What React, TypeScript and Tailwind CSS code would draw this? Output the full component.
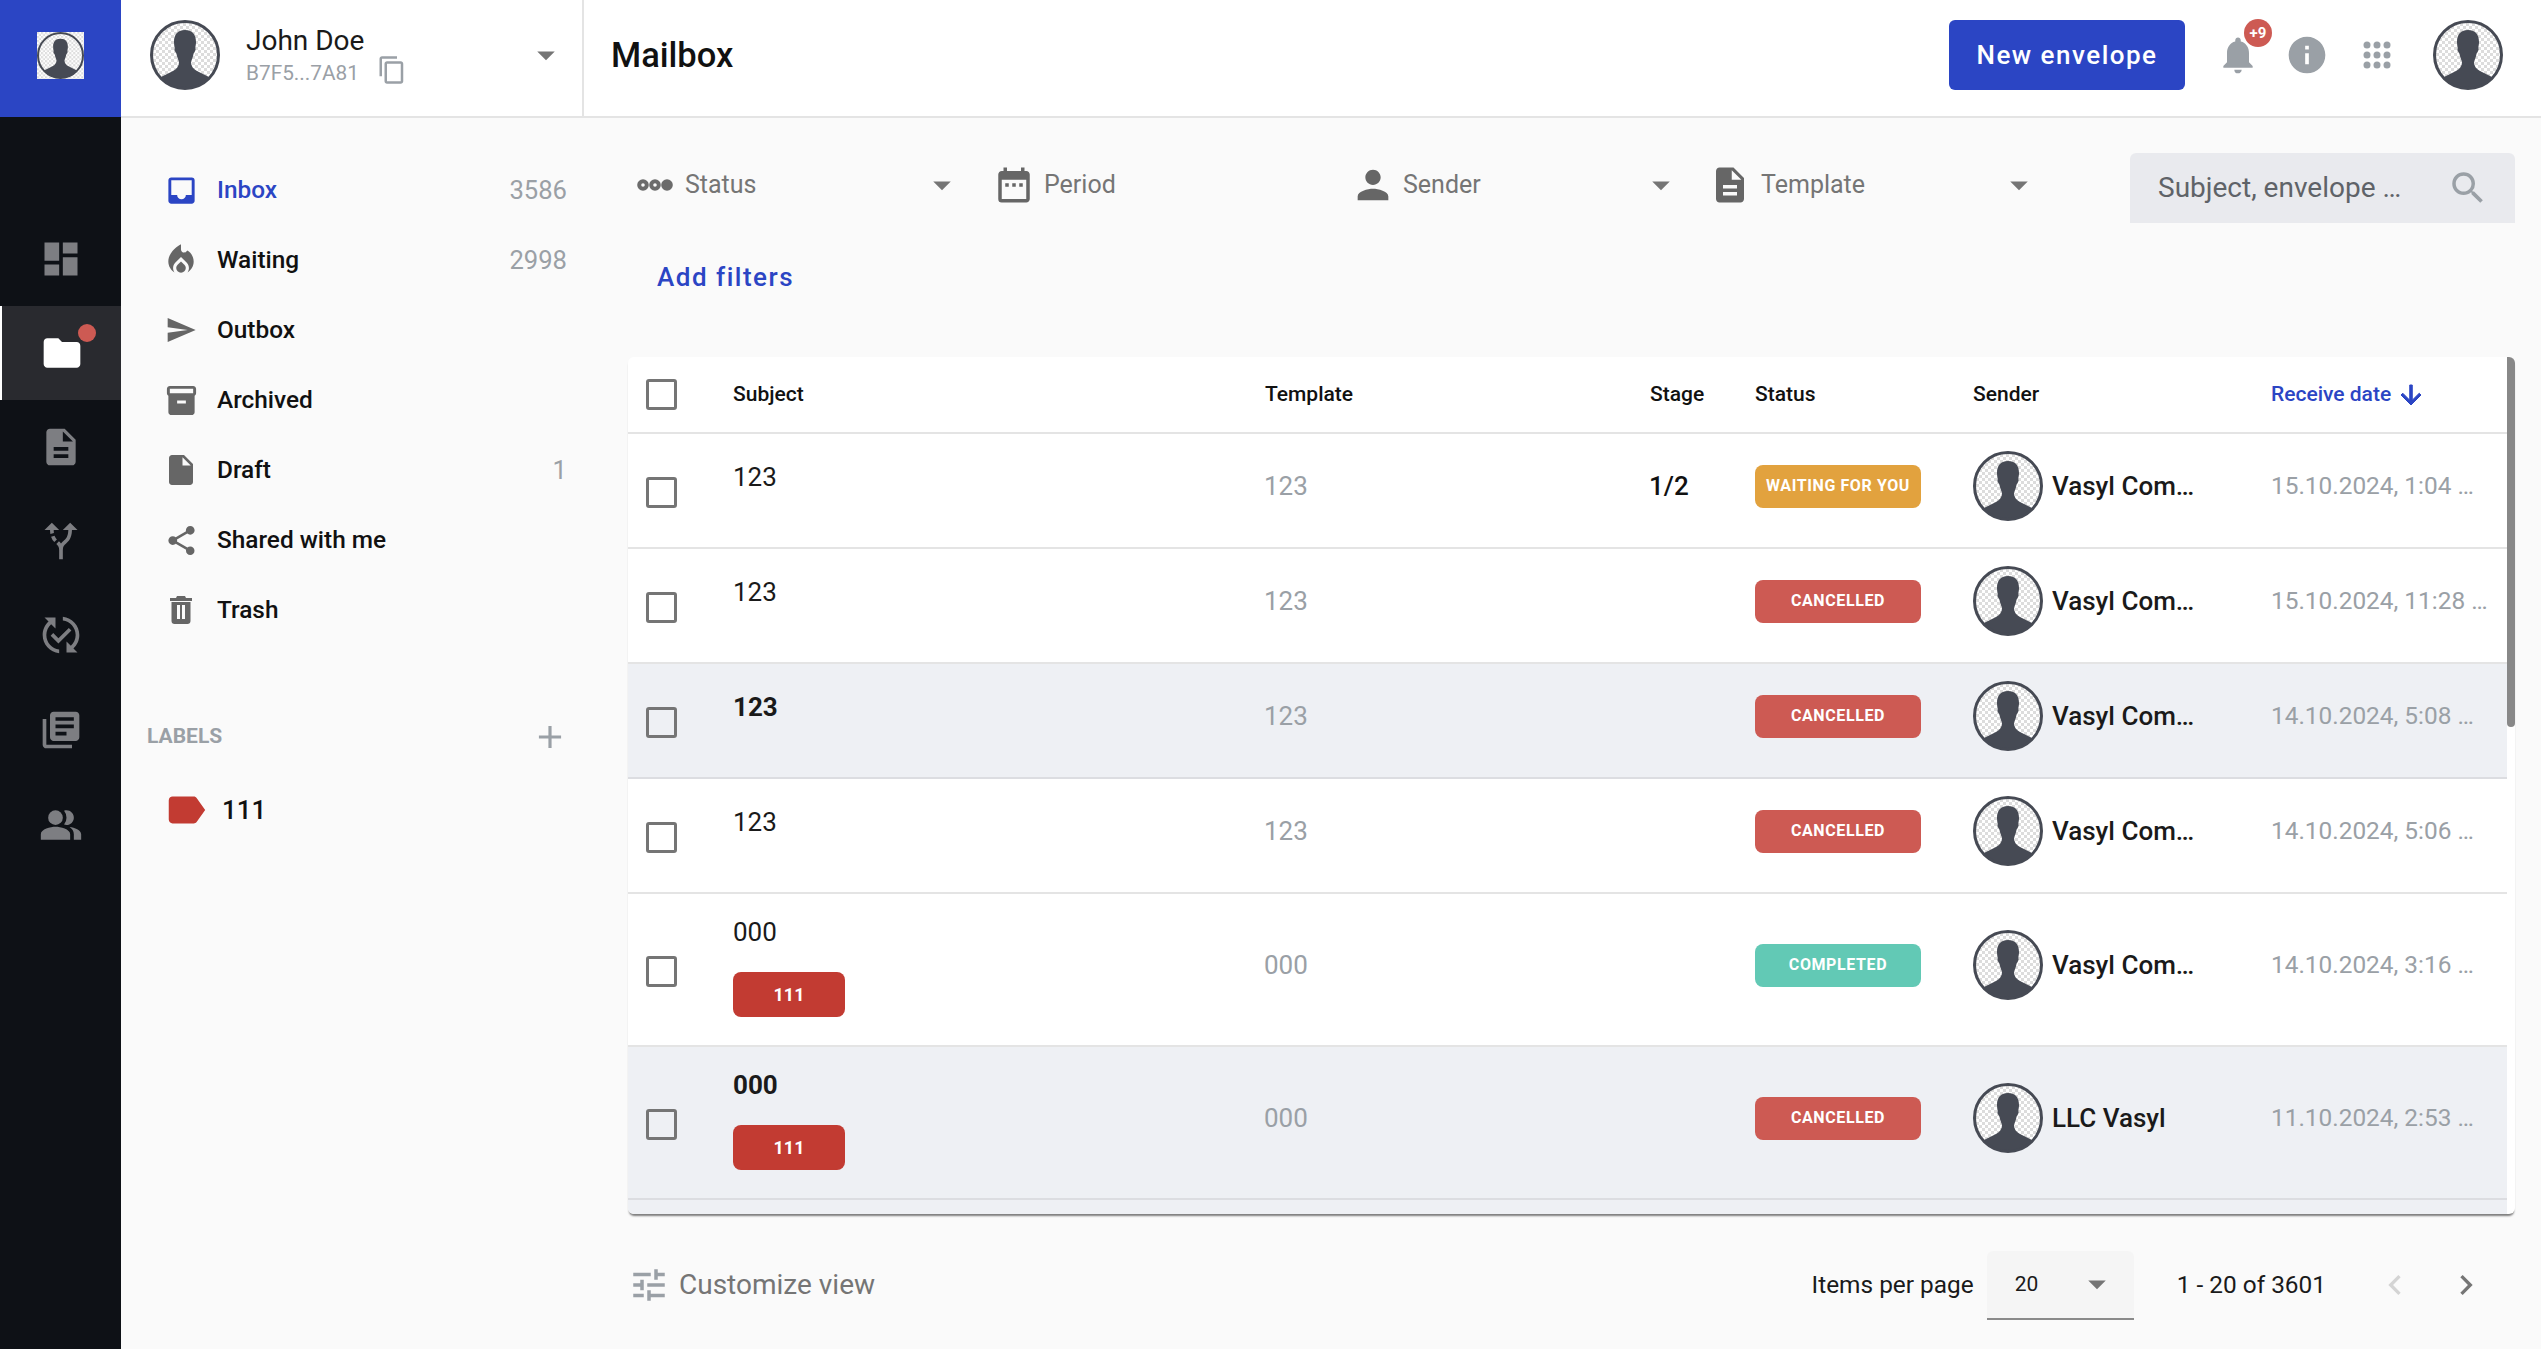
import { useId } from "react";
import type { ReactNode } from "react";
import {
  MdAdd,
  MdAltRoute,
  MdArrowDropDown,
  MdChevronLeft,
  MdChevronRight,
  MdContentCopy,
  MdDashboard,
  MdDateRange,
  MdDescription,
  MdFolder,
  MdInbox,
  MdInfo,
  MdInsertDriveFile,
  MdInventory2,
  MdLabel,
  MdLibraryBooks,
  MdLocalFireDepartment,
  MdNotifications,
  MdPeopleAlt,
  MdPerson,
  MdPublishedWithChanges,
  MdSearch,
  MdSend,
  MdShare,
  MdTune,
} from "react-icons/md";

function Avatar({ className, square }: { className: string; square?: boolean }) {
  const id = useId();
  return (
    <svg viewBox="0 0 70 70" className={className}>
      <defs>
        <pattern id={`${id}c`} width="6" height="6" patternUnits="userSpaceOnUse">
          <rect width="6" height="6" fill="#fff" />
          <rect width="3" height="3" fill="#dcdcdc" />
          <rect x="3" y="3" width="3" height="3" fill="#dcdcdc" />
        </pattern>
        <clipPath id={`${id}a`}>
          <circle cx="35" cy="35" r="34" />
        </clipPath>
      </defs>
      {square && <rect width="70" height="70" fill={`url(#${id}c)`} />}
      <circle cx="35" cy="35" r="34" fill={`url(#${id}c)`} />
      <path
        clipPath={`url(#${id}a)`}
        fill="#464a54"
        d="M35 10C27 10 24 15 24 22C24 26 25 27 24.5 29C24 31 26 32 26.5 34C27 37 28.5 40 29 42C29 46 27 49 23 51L9 58L9 70L61 70L61 58L47 51C43 49 41 46 41 42C41.5 40 43 37 43.5 34C44 32 46 31 45.5 29C45 27 46 26 46 22C46 15 43 10 35 10Z"
      />
      <circle cx="35" cy="35" r="33.5" fill="none" stroke="#464a54" strokeWidth="3" />
    </svg>
  );
}

function StatusDots({ className }: { className: string }) {
  return (
    <svg viewBox="0 0 36 14" className={className}>
      <circle cx="6" cy="7" r="3.8" fill="none" stroke="#6b6b6b" strokeWidth="4" />
      <circle cx="18" cy="7" r="3.8" fill="none" stroke="#6b6b6b" strokeWidth="4" />
      <circle cx="30" cy="7" r="5.8" fill="#6b6b6b" />
    </svg>
  );
}

function TrashIcon({ className }: { className: string }) {
  return (
    <svg viewBox="0 0 24 28" className={className}>
      <path
        fill="#666"
        d="M8 0h8l1 2h6v3H1V2h6zM2.500 6h19v19c0 1.700-1.300 3-3 3h-13c-1.700 0-3-1.300-3-3z"
      />
      <rect x="8" y="9" width="3" height="14" fill="#fafafa" />
      <rect x="13" y="9" width="3" height="14" fill="#fafafa" />
    </svg>
  );
}

function DotGrid({ className }: { className: string }) {
  const dots = [4, 14, 24];
  return (
    <svg viewBox="0 0 28 28" className={className}>
      {dots.map((y) => dots.map((x) => <circle key={`${x}${y}`} cx={x} cy={y} r="3.5" fill="#9aa0a6" />))}
    </svg>
  );
}

function SortArrow({ className }: { className: string }) {
  return (
    <svg viewBox="0 0 24 24" className={className}>
      <path
        fill="currentColor"
        stroke="currentColor"
        strokeWidth="0.8"
        d="M20 12l-1.410-1.410L13 16.170V4h-2v12.170l-5.580-5.590L4 12l8 8 8-8z"
      />
    </svg>
  );
}

function Caret() {
  return <MdArrowDropDown className="h-[42px] w-[42px] text-[#757575]" />;
}

const railIcons = [
  { icon: <MdDashboard className="h-[44px] w-[44px]" />, h: "h-[94px]" },
  { icon: <MdFolder className="h-[44px] w-[44px] text-white" />, active: true, h: "h-[94px]" },
  { icon: <MdDescription className="h-[44px] w-[44px]" />, h: "h-[94px]" },
  { icon: <MdAltRoute className="h-[44px] w-[44px]" />, h: "h-[94px]" },
  { icon: <MdPublishedWithChanges className="h-[44px] w-[44px]" />, h: "h-[94px]" },
  { icon: <MdLibraryBooks className="h-[44px] w-[44px]" />, h: "h-[96px]" },
  { icon: <MdPeopleAlt className="h-[44px] w-[44px]" />, h: "h-[94px]" },
];

function Rail() {
  return (
    <aside className="flex w-[121px] shrink-0 flex-col bg-[#0e1116] text-[#7d7e82]">
      <div className="flex h-[117px] items-center justify-center bg-[#2b45c4] pb-[6px]">
        <Avatar square className="h-[47px] w-[47px]" />
      </div>
      <div className="flex flex-col pt-[95px]">
        {railIcons.map((item, i) =>
          item.active ? (
            <div key={i} className="relative flex h-[94px] items-center justify-center border-l-2 border-white bg-[#292a2f]">
              {item.icon}
              <span className="absolute left-[76px] top-[18px] h-[18px] w-[18px] rounded-full bg-[#cd5a53]" />
            </div>
          ) : (
            <div key={i} className={`flex items-center justify-center ${item.h}`}>
              {item.icon}
            </div>
          ),
        )}
      </div>
    </aside>
  );
}

function TopBar() {
  return (
    <header className="flex h-[118px] shrink-0 border-b-2 border-[#e4e4e4] bg-white">
      <div className="flex h-full w-[463px] shrink-0 items-center border-r-2 border-[#e4e4e4] pb-[6px] pl-[29px]">
        <Avatar className="h-[70px] w-[70px] shrink-0" />
        <div className="ml-[26px] flex flex-col">
          <span className="text-[28px] leading-[34px] text-[#1a1a1a]">John Doe</span>
          <div className="mt-[1px] flex items-center">
            <span className="text-[20.800px] leading-[28px] text-[#9aa0a6]">B7F5...7A81</span>
            <MdContentCopy className="-mt-[5px] ml-[18px] h-[30px] w-[30px] text-[#9aa0a6]" />
          </div>
        </div>
        <div className="ml-auto mr-[15px]">
          <Caret />
        </div>
      </div>
      <h1 className="ml-[27px] self-center pb-[4px] text-[34.500px] font-medium text-[#111]">Mailbox</h1>
      <div className="ml-auto flex items-center pb-[6px] pr-[38px]">
        <button className="h-[70px] w-[236px] rounded-[6px] bg-[#2b45c4] text-[26px] font-medium tracking-[1.5px] text-white">
          New envelope
        </button>
        <div className="relative ml-[31px] h-[44px] w-[44px]">
          <MdNotifications className="h-[44px] w-[44px] text-[#9aa0a6]" />
          <span className="absolute -top-[14px] left-[28px] flex h-[28px] w-[28px] items-center justify-center rounded-full bg-[#cd5a53] text-[15px] font-bold text-white">
            +9
          </span>
        </div>
        <MdInfo className="ml-[25px] h-[44px] w-[44px] text-[#9aa0a6]" />
        <DotGrid className="ml-[34px] h-[28px] w-[28px]" />
        <Avatar className="ml-[42px] h-[70px] w-[70px]" />
      </div>
    </header>
  );
}

const navItems: { label: string; count?: string; icon: ReactNode; active?: boolean }[] = [
  { label: "Inbox", count: "3586", active: true, icon: <MdInbox className="h-[35px] w-[35px] text-[#2b45c4]" /> },
  { label: "Waiting", count: "2998", icon: <MdLocalFireDepartment className="h-[38px] w-[38px] text-[#666]" /> },
  { label: "Outbox", icon: <MdSend className="h-[32px] w-[32px] text-[#666]" /> },
  { label: "Archived", icon: <MdInventory2 className="h-[35px] w-[35px] text-[#666]" /> },
  { label: "Draft", count: "1", icon: <MdInsertDriveFile className="h-[36px] w-[36px] text-[#666]" /> },
  { label: "Shared with me", icon: <MdShare className="h-[35px] w-[35px] text-[#666]" /> },
  { label: "Trash", icon: <TrashIcon className="h-[28px] w-[24px]" /> },
];

function Nav() {
  return (
    <nav className="w-[462px] shrink-0 pt-[37px]">
      {navItems.map((item) => (
        <div key={item.label} className="flex h-[70px] items-center pl-[41px] pr-[16px]">
          <div className="flex w-[38px] shrink-0 items-center justify-center">{item.icon}</div>
          <span className={`ml-[17px] text-[24.400px] font-medium ${item.active ? "text-[#2b45c4]" : "text-[#111]"}`}>
            {item.label}
          </span>
          {item.count && <span className="ml-auto text-[25.600px] text-[#9aa0a6]">{item.count}</span>}
        </div>
      ))}
      <div className="mt-[73px] flex items-center pl-[26px] pr-[14px]">
        <span className="text-[21px] font-bold text-[#9aa0a6]">LABELS</span>
        <MdAdd className="ml-auto h-[38px] w-[38px] text-[#9aa0a6]" />
      </div>
      <div className="mt-[31px] flex items-center pl-[42px]">
        <MdLabel className="h-[46px] w-[46px] text-[#c23b32]" />
        <span className="ml-[13px] text-[26px] font-medium text-[#111]">111</span>
      </div>
    </nav>
  );
}

function FilterItem({ icon, label, caret = true, box, gap }: { icon: ReactNode; label: string; caret?: boolean; box: string; gap: string }) {
  return (
    <div className={`flex items-center ${box} pb-[6px]`}>
      {icon}
      <span className={`${gap} text-[25px] text-[#757575]`}>{label}</span>
      {caret && (
        <div className="ml-auto">
          <Caret />
        </div>
      )}
    </div>
  );
}

function Filters() {
  return (
    <div className="flex h-[70px] items-center pl-[9px]">
      <FilterItem box="w-[356px] pr-[30px]" gap="ml-[12px]" label="Status" icon={<StatusDots className="h-[14px] w-[36px]" />} />
      <FilterItem box="w-[357px]" gap="ml-[9px]" label="Period" caret={false} icon={<MdDateRange className="h-[42px] w-[42px] text-[#666]" />} />
      <FilterItem box="w-[359px] pr-[27px]" gap="ml-[7px]" label="Sender" icon={<MdPerson className="h-[46px] w-[46px] text-[#666]" />} />
      <FilterItem box="w-[331px]" gap="ml-[10px]" label="Template" icon={<MdDescription className="h-[42px] w-[42px] text-[#666]" />} />
      <div className="ml-auto flex h-[70px] w-[385px] items-center rounded-t-[6px] bg-[#e9eaee] pl-[28px] pr-[26px]">
        <span className="text-[28px] text-[#5f6368]">Subject, envelope …</span>
        <MdSearch className="ml-auto h-[42px] w-[42px] text-[#9aa0a6]" />
      </div>
    </div>
  );
}

type Row = {
  subject: string;
  template: string;
  stage?: string;
  status: "waiting" | "cancelled" | "completed";
  sender: string;
  date: string;
  unread?: boolean;
  label?: boolean;
};

const rows: Row[] = [
  { subject: "123", template: "123", stage: "1/2", status: "waiting", sender: "Vasyl Com…", date: "15.10.2024, 1:04 …" },
  { subject: "123", template: "123", status: "cancelled", sender: "Vasyl Com…", date: "15.10.2024, 11:28 …" },
  { subject: "123", template: "123", status: "cancelled", sender: "Vasyl Com…", date: "14.10.2024, 5:08 …", unread: true },
  { subject: "123", template: "123", status: "cancelled", sender: "Vasyl Com…", date: "14.10.2024, 5:06 …" },
  { subject: "000", template: "000", status: "completed", sender: "Vasyl Com…", date: "14.10.2024, 3:16 …", label: true },
  { subject: "000", template: "000", status: "cancelled", sender: "LLC Vasyl", date: "11.10.2024, 2:53 …", unread: true, label: true },
];

const statusStyles = {
  waiting: { text: "WAITING FOR YOU", bg: "bg-[#e2a23e]" },
  cancelled: { text: "CANCELLED", bg: "bg-[#cd5a53]" },
  completed: { text: "COMPLETED", bg: "bg-[#62c9b5]" },
};

const gridCols = "grid-cols-[105px_532px_385px_105px_218px_298px_236px]";

function Checkbox() {
  return <div className="ml-[18px] h-[31px] w-[31px] rounded-[3px] border-[3px] border-[#757575]" />;
}

function TableRow({ row }: { row: Row }) {
  const status = statusStyles[row.status];
  return (
    <div
      className={`grid ${gridCols} ${row.label ? "h-[153px]" : "h-[115px]"} shrink-0 items-center border-b-2 ${
        row.unread ? "border-[#dcdde1] bg-[#eef0f4]" : "border-[#e4e4e4] bg-white"
      }`}
    >
      <div className="pt-[4px]">
        <Checkbox />
      </div>
      <div className={`flex flex-col items-start ${row.label ? "pb-[5px]" : "pb-[2px]"}`}>
        <span className={`text-[26px] leading-[30px] text-[#1a1a1a] ${row.unread ? "font-bold" : ""}`}>{row.subject}</span>
        {row.label ? (
          <span className="mt-[25px] flex h-[45px] w-[112px] items-center justify-center rounded-[8px] bg-[#c23b32] text-[18px] font-bold text-white">
            111
          </span>
        ) : (
          <span className="h-[26px]" />
        )}
      </div>
      <div className="-ml-[1px] pb-[9px] text-[26px] text-[#9aa0a6]">{row.template}</div>
      <div className="-ml-[1px] pb-[9px] text-[26px] font-medium text-[#111]">{row.stage}</div>
      <div className="pb-[9px]">
        <span className={`flex h-[43px] w-[166px] items-center justify-center rounded-[8px] text-[16px] font-bold tracking-[0.6px] text-white ${status.bg}`}>
          {status.text}
        </span>
      </div>
      <div className="flex items-center pb-[9px]">
        <Avatar className="h-[70px] w-[70px] shrink-0" />
        <span className="ml-[9px] text-[26px] font-medium text-[#1a1a1a]">{row.sender}</span>
      </div>
      <div className="whitespace-nowrap pb-[9px] text-[24.400px] text-[#9aa0a6]">{row.date}</div>
    </div>
  );
}

function MailTable() {
  return (
    <div className="relative mt-[60px] flex h-[857px] flex-col overflow-hidden rounded-[6px] bg-white pr-[8px] shadow-[0_3px_2px_-1px_rgba(0,0,0,0.5)]">
      <div className={`grid ${gridCols} h-[77px] shrink-0 items-center border-b-2 border-[#e4e4e4] text-[21px] font-medium text-[#111]`}>
        <Checkbox />
        <div>Subject</div>
        <div>Template</div>
        <div>Stage</div>
        <div>Status</div>
        <div>Sender</div>
        <div className="flex items-center text-[#2b45c4]">
          Receive date
          <SortArrow className="ml-[5px] h-[30px] w-[30px]" />
        </div>
      </div>
      {rows.map((row, i) => (
        <TableRow key={i} row={row} />
      ))}
      <div className="flex-1 bg-[#eef0f4]" />
      <div className="absolute right-0 top-0 h-[370px] w-[8px] rounded-b-[4px] bg-[#888]" />
    </div>
  );
}

function Footer() {
  return (
    <div className="mt-[35px] flex h-[71px] items-center pt-[1px]">
      <MdTune className="h-[42px] w-[42px] text-[#9aa0a6]" />
      <span className="ml-[9px] text-[28px] text-[#757575]">Customize view</span>
      <span className="ml-auto text-[24.400px] text-[#1a1a1a]">Items per page</span>
      <div className="ml-[13px] flex h-[69px] w-[147px] items-center rounded-t-[6px] border-b-2 border-[#8a8a8a] bg-[#f5f5f5] pl-[28px] pr-[16px]">
        <span className="pt-[2px] text-[21px] text-[#1a1a1a]">20</span>
        <div className="ml-auto">
          <Caret />
        </div>
      </div>
      <span className="ml-[43px] text-[24.400px] text-[#1a1a1a]">1 - 20 of 3601</span>
      <MdChevronLeft className="ml-[49px] h-[40px] w-[40px] text-[#d4d4d4]" />
      <MdChevronRight className="ml-[31px] h-[40px] w-[40px] text-[#757575]" />
      <span className="w-[29px]" />
    </div>
  );
}

export default function App() {
  return (
    <div className="flex h-[1349px] w-[2541px] overflow-hidden bg-[#fafafa] font-['Roboto',sans-serif]">
      <Rail />
      <div className="flex min-w-0 flex-1 flex-col">
        <TopBar />
        <div className="flex min-h-0 flex-1">
          <Nav />
          <main className="min-w-0 flex-1 pl-[45px] pr-[26px] pt-[35px]">
            <Filters />
            <div className="mt-[34px] h-[40px] pl-[29px] text-[26px] font-medium leading-[40px] tracking-[1.5px] text-[#2b45c4]">Add filters</div>
            <MailTable />
            <Footer />
          </main>
        </div>
      </div>
    </div>
  );
}
